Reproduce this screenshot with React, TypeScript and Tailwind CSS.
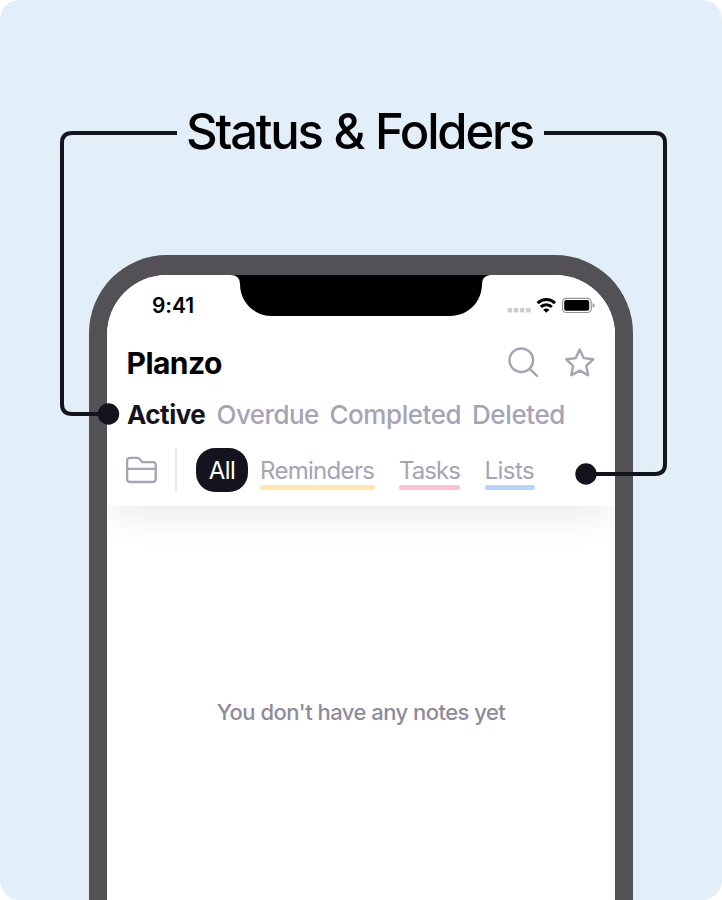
const statuses = [
  { label: 'Active', box: 'ml-[20px] w-[89.5px] font-bold text-[#14141f] tracking-[-0.5px]' },
  { label: 'Overdue', box: 'w-[113px] font-medium text-[#a5a4b4] tracking-[-0.55px]' },
  { label: 'Completed', box: 'w-[142.5px] font-medium text-[#a5a4b4] tracking-[-0.45px]' },
  { label: 'Deleted', box: 'w-[100px] font-medium text-[#a5a4b4] tracking-[-0.4px]' },
];

const folders = [
  { label: 'Reminders', box: 'ml-[12px] w-[115px]', bar: 'bg-[#ffe7a8]', text: 'tracking-[-0.7px]' },
  { label: 'Tasks', box: 'ml-[24px] w-[61px]', bar: 'bg-[#ffc0cb]', text: 'tracking-[-0.95px]' },
  { label: 'Lists', box: 'ml-[24.5px] w-[50.5px]', bar: 'bg-[#b8d2ff]', text: 'tracking-[-0.55px]' },
];

function StatusBar() {
  return (
    <div className="relative flex h-[60px]">
      <div className="ml-[45px] mt-[16px] text-[21px] leading-[30px] font-semibold tracking-[-0.1px] text-black">9:41</div>
      <svg className="absolute left-[123px] top-0" width="260" height="42" viewBox="230 275 260 42">
        <path d="M230 275Q240 275 240 284C240 302 254 316 272 316H450C468 316 482 302 482 284Q482 275 492 275Z" fill="#000" />
      </svg>
      <svg className="absolute left-[400px] top-[20px]" width="90" height="22" viewBox="507 295 90 22">
        <g fill="#ccc">
          <rect x="507.7" y="308" width="4.6" height="4.6" rx="1" />
          <rect x="513.8" y="308" width="4.6" height="4.6" rx="1" />
          <rect x="519.9" y="308" width="4.6" height="4.6" rx="1" />
          <rect x="526" y="308" width="4.6" height="4.6" rx="1" />
        </g>
        <g fill="none" stroke="#000" strokeWidth="3">
          <path d="M537.6 303.1A12.6 12.6 0 0 1 555 303.1" />
          <path d="M540.8 306.9A8 8 0 0 1 551.8 306.9" />
        </g>
        <path d="M543.2 309.8A4.8 4.8 0 0 1 549.4 309.8L546.3 312.8Z" fill="#000" />
        <rect x="562.5" y="298.3" width="28.7" height="14.2" rx="3.8" fill="none" stroke="#929292" strokeWidth="1.2" />
        <rect x="564.2" y="300" width="25" height="10.8" rx="2" />
        <path d="M592.6 303Q594.7 303.7 594.7 305.4Q594.7 307.2 592.6 307.8Z" fill="#999" />
      </svg>
    </div>
  );
}

function Phone() {
  return (
    <section className="ml-[89px] h-[645px] w-[544px] rounded-t-[78px] bg-[#545156] px-[18px] pt-[20px]">
      <div className="h-[625px] w-[508px] overflow-hidden rounded-t-[60px] bg-white">
        <header className="h-[231px] bg-white shadow-[0_12px_36px_-4px_rgba(0,0,0,0.09)]">
          <StatusBar />
          <div className="flex h-[54px] items-center">
            <h2 className="ml-[19.5px] mt-[2px] w-[379.5px] text-[30px] leading-[40px] font-bold tracking-[-0.55px] text-black">Planzo</h2>
            <svg width="92" height="36" viewBox="506 344 92 36" fill="none" stroke="#a5a4b4" strokeWidth="2.4" strokeLinecap="round" strokeLinejoin="round">
              <circle cx="521.3" cy="360.3" r="11.8" />
              <path d="M529.8 368.8L537 376" />
              <path d="M579.7 349.5L583.7 358.1L593.2 359.3L586.3 365.8L588.1 375.2L579.7 370.6L571.3 375.2L573.1 365.8L566.2 359.3L575.7 358.1Z" />
            </svg>
          </div>
          <nav className="flex h-[52px] items-center whitespace-nowrap text-[26px] leading-[32px]">
            {statuses.map((s) => (
              <span key={s.label} className={s.box}>{s.label}</span>
            ))}
          </nav>
          <div className="flex h-[58px] items-center whitespace-nowrap text-[24px] leading-[30px]">
            <svg className="ml-[18px]" width="34" height="32" viewBox="125 454 34 32" fill="none" stroke="#a5a4b4" strokeWidth="2.3" strokeLinejoin="round">
              <path d="M127.1 460.5Q127.1 457.8 129.8 457.8H137.3Q138.6 457.8 139.4 458.8L141.5 461.4Q142.2 462.2 143.4 462.2H153Q155.7 462.2 155.7 464.9V479Q155.7 482 152.7 482H130.1Q127.1 482 127.1 479ZM127.1 468.8H155.7" />
            </svg>
            <div className="ml-[16px] h-[44px] w-[2px] bg-[#e8e8eb]" />
            <div className="ml-[19px] flex h-[44px] w-[52px] items-center justify-center rounded-[19px] bg-[#14141f] pt-[2px] tracking-[-0.6px] text-white">All</div>
            {folders.map((f) => (
              <div key={f.label} className={`${f.box} flex h-[42px] flex-col justify-end text-[#a5a4b4]`}>
                <span className={f.text}>{f.label}</span>
                <i className={`${f.bar} -mt-px mb-[1px] block h-[5px] rounded-full`} />
              </div>
            ))}
          </div>
        </header>
        <p className="mt-[190px] text-center text-[22px] leading-[32px] font-medium tracking-[-0.53px] text-[#8e8c99]">You don't have any notes yet</p>
      </div>
    </section>
  );
}

export default function App() {
  return (
    <div className="h-[900px] w-[722px] bg-white font-['Inter',sans-serif]">
      <main className="relative h-full overflow-hidden rounded-[20px] bg-[#e2eff8]">
        <div className="flex h-[255px] pt-[102px]">
          <h1 className="ml-[186px] h-[60px] whitespace-nowrap text-[49px] leading-[60px] font-medium tracking-[-2.2px] [word-spacing:0.8px] text-black">Status &amp; Folders</h1>
        </div>
        <Phone />
        <svg className="absolute left-0 top-0" width="722" height="900" fill="none" stroke="#14141f" strokeWidth="4">
          <path d="M177 133H72Q62 133 62 143V404Q62 414 72 414H108" />
          <path d="M544 133H655Q665 133 665 143V464Q665 474 655 474H586" />
          <circle cx="108.5" cy="414" r="10.7" fill="#14141f" stroke="none" />
          <circle cx="586" cy="474" r="10.7" fill="#14141f" stroke="none" />
        </svg>
      </main>
    </div>
  );
}
